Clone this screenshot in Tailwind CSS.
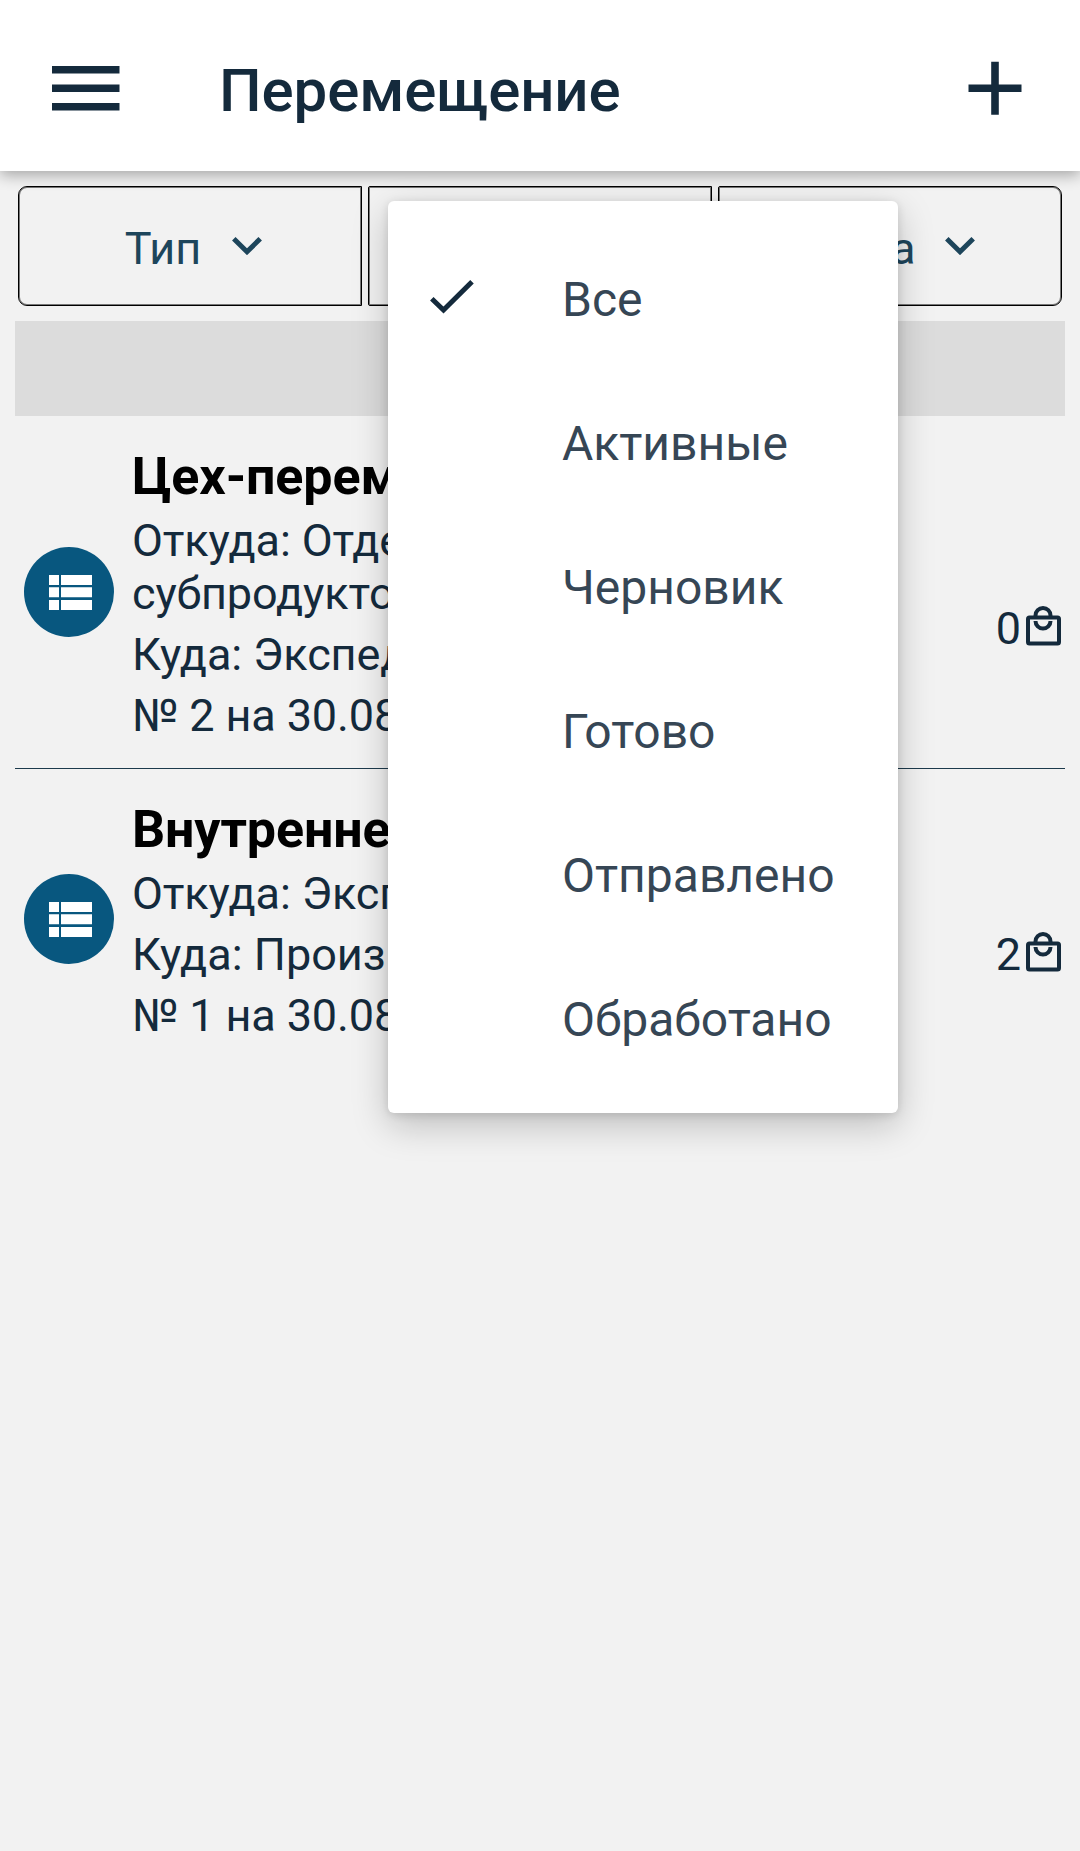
<!DOCTYPE html>
<html lang="ru">
<head>
<meta charset="utf-8">
<title>Перемещение</title>
<script src="https://cdn.jsdelivr.net/npm/@tailwindcss/browser@4"></script>
</head>
<body class="bg-[#f2f2f2]">
<div class="relative flex flex-col w-[1080px] h-[1851px] overflow-hidden bg-[#f2f2f2] font-[Roboto,sans-serif] text-[#142a3c]">
  <header class="relative flex items-center h-[171px] shrink-0 bg-white pl-[52px] pr-[58px] pt-[5px] shadow-[0_4px_14px_rgba(0,0,0,0.32)]">
    <svg class="w-[68px] h-[46px]" viewBox="0 0 68 46" fill="currentColor"><path d="M0 1h67.500v7.500H0zM0 19.500h67.500v7.500H0zM0 38h67.500v7.500H0z"/></svg>
    <h1 class="ml-[99px] mt-[5px] grow text-[60px] leading-[70px] font-medium tracking-[-0.1px] whitespace-nowrap">Перемещение</h1>
    <svg class="w-[54px] h-[54px]" viewBox="0 0 54 54" fill="currentColor"><path d="M23.200.8h7.600v22.700h22.700v7.600H30.800v22.700H23.200V31.100H.5v-7.600h22.700z"/></svg>
  </header>

  <nav class="flex gap-[6px] h-[120px] shrink-0 mt-[15px] px-[18px] text-[45px] text-[#1d455b]">
    <button class="flex w-[344px] items-center justify-center pl-[7px] border border-black inset-shadow-[0_0_0_1px_#777] rounded-l-[9px]">
      <span class="mt-[4px] leading-[53px]">Тип</span>
      <svg class="ml-[31px] w-[30px] h-[18px]" viewBox="0 0 30 18" fill="none" stroke="currentColor" stroke-width="5"><path d="M1.800 1.800 15 14.700 28.200 1.800"/></svg>
    </button>
    <button class="flex w-[344px] items-center justify-center pl-[7px] border border-black inset-shadow-[0_0_0_1px_#777] rounded-l-[2px]">
      <span class="mt-[4px] leading-[53px]">Статус</span>
      <svg class="ml-[31px] w-[30px] h-[18px]" viewBox="0 0 30 18" fill="none" stroke="currentColor" stroke-width="5"><path d="M1.800 1.800 15 14.700 28.200 1.800"/></svg>
    </button>
    <button class="flex w-[344px] items-center justify-center pl-[7px] border border-black inset-shadow-[0_0_0_1px_#777] rounded-l-[2px] rounded-r-[9px]">
      <span class="mt-[4px] leading-[53px]">Дата</span>
      <svg class="ml-[30px] w-[30px] h-[18px]" viewBox="0 0 30 18" fill="none" stroke="currentColor" stroke-width="5"><path d="M1.800 1.800 15 14.700 28.200 1.800"/></svg>
    </button>
  </nav>

  <main class="flex flex-col mt-[15px] px-[15px]">
    <div class="h-[95px] bg-[#dcdcdc]"></div>
    <article class="flex items-center pt-[31px] pb-[26px] border-b border-[#1d3a4c]">
      <div class="flex items-center justify-center size-[90px] ml-[9px] mb-[5px] shrink-0 rounded-full bg-[#08577f] text-white">
        <svg class="w-[43px] h-[35px] ml-[3px] mt-px" viewBox="0 0 43 35" fill="currentColor"><path d="M0 0h10v10H0zM12 0h31v10H12zM0 12.200h10v10H0zM12 12.200h31v10H12zM0 25h10v10H0zM12 25h31v10H12z"/></svg>
      </div>
      <div class="flex flex-col gap-2 w-[640px] ml-[18px] text-[45px] leading-[53px] tracking-[-0.12px]">
        <h2 class="-mb-px text-[52px] leading-[60px] font-bold text-black">Цех-перемещение</h2>
        <p>Откуда: Отделение<br>субпродуктов</p>
        <p>Куда: Экспедиция</p>
        <p>№ 2 на 30.08.2021</p>
      </div>
      <div class="flex grow items-center justify-end pt-[67px] pr-[4px] text-[45px] leading-[53px]">
        <span>0</span>
        <svg class="w-[35px] h-[41px] ml-[5px] mb-[6px]" viewBox="0 0 35 41" fill="none" stroke="currentColor" stroke-width="4"><rect x="2" y="12.500" width="31" height="26" rx="1.500"/><path d="M9.500 12V10.500a7.500 7.500 0 0 1 15 0V12M9.500 16a7.500 7.500 0 0 0 15 0"/></svg>
      </div>
    </article>
    <article class="flex items-center pt-[31px] pb-[26px] border-b border-transparent">
      <div class="flex items-center justify-center size-[90px] ml-[9px] mb-[5px] shrink-0 rounded-full bg-[#08577f] text-white">
        <svg class="w-[43px] h-[35px] ml-[3px] mt-px" viewBox="0 0 43 35" fill="currentColor"><path d="M0 0h10v10H0zM12 0h31v10H12zM0 12.200h10v10H0zM12 12.200h31v10H12zM0 25h10v10H0zM12 25h31v10H12z"/></svg>
      </div>
      <div class="flex flex-col gap-2 w-[640px] ml-[18px] text-[45px] leading-[53px] tracking-[-0.12px]">
        <h2 class="-mb-px text-[52px] leading-[60px] font-bold text-black">Внутреннее</h2>
        <p>Откуда: Экспедиция</p>
        <p class="tracking-normal">Куда: Производство</p>
        <p>№ 1 на 30.08.2021</p>
      </div>
      <div class="flex grow items-center justify-end pt-[67px] pr-[4px] text-[45px] leading-[53px]">
        <span>2</span>
        <svg class="w-[35px] h-[41px] ml-[5px] mb-[6px]" viewBox="0 0 35 41" fill="none" stroke="currentColor" stroke-width="4"><rect x="2" y="12.500" width="31" height="26" rx="1.500"/><path d="M9.500 12V10.500a7.500 7.500 0 0 1 15 0V12M9.500 16a7.500 7.500 0 0 0 15 0"/></svg>
      </div>
    </article>
  </main>

  <ul class="absolute left-[388px] top-[201px] flex flex-col w-[510px] py-[24px] rounded-[6px] bg-white text-[48px] text-[#364655] shadow-[0_12px_36px_rgba(0,0,0,0.22),0_2px_10px_rgba(0,0,0,0.12)]">
    <li class="relative flex items-center h-[144px] pt-[6px] pl-[174px]">
      <svg class="absolute left-[42px] top-[55px] w-[44px] h-[34px]" viewBox="0 0 44 34" fill="none" stroke="#142a3c" stroke-width="5"><path d="M1.800 18.800 13.500 30 42 1.800"/></svg>Все</li>
    <li class="flex items-center h-[144px] pt-[6px] pl-[174px]">Активные</li>
    <li class="flex items-center h-[144px] pt-[6px] pl-[174px]">Черновик</li>
    <li class="flex items-center h-[144px] pt-[6px] pl-[174px]">Готово</li>
    <li class="flex items-center h-[144px] pt-[6px] pl-[174px]">Отправлено</li>
    <li class="flex items-center h-[144px] pt-[6px] pl-[174px]">Обработано</li>
  </ul>
</div>
</body>
</html>
